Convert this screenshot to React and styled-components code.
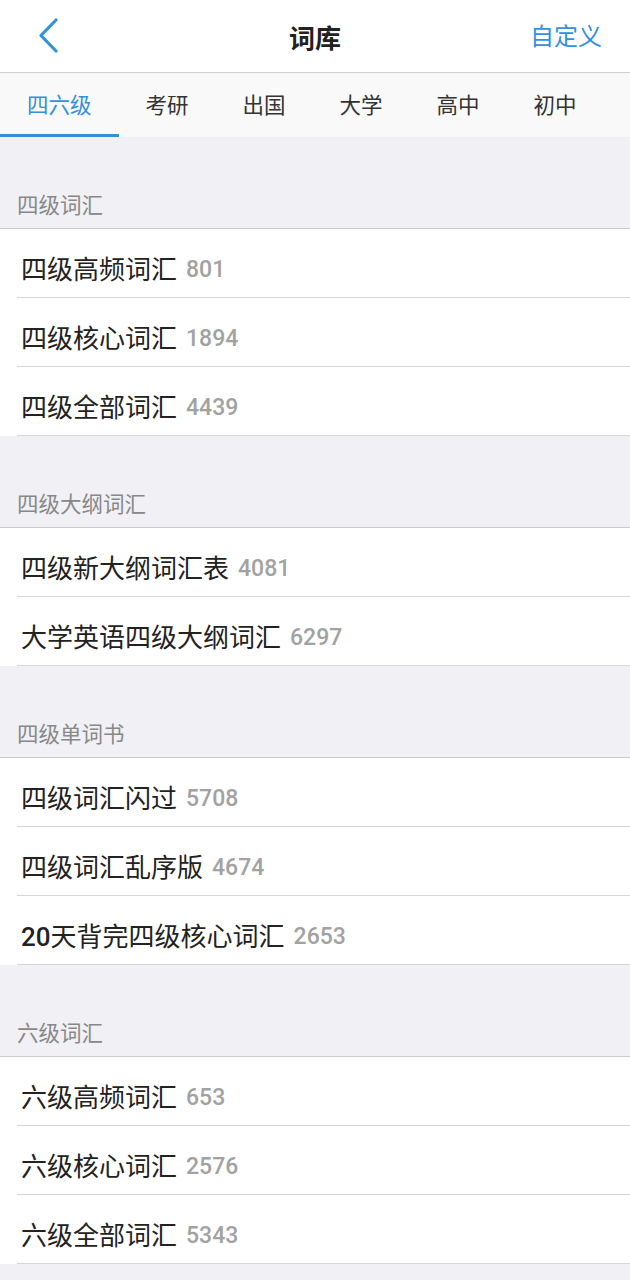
import styled, { createGlobalStyle } from 'styled-components';

const GlobalStyle = createGlobalStyle`
  html, body {
    margin: 0;
    padding: 0;
    background: #f1f1f5;
  }

  body {
    font-family: "Noto Sans CJK SC", "Noto Sans", sans-serif;
  }
`;

const BLUE = '#3191de';

const StyledPage = styled.div`
  width: 630px;
  min-height: 1280px;
  overflow: hidden;
  background: #f1f1f5;
`;

const StyledHeader = styled.header`
  align-items: center;
  background: #fff;
  border-bottom: 1px solid #cfcfd3;
  box-sizing: border-box;
  display: grid;
  grid-template-columns: 110px 1fr 110px;
  height: 73px;
`;

const StyledBack = styled.button`
  background: none;
  border: 0;
  cursor: pointer;
  display: flex;
  padding: 0 0 0 36px;
`;

const StyledTitle = styled.h1`
  color: #222;
  font-size: 26px;
  font-weight: 700;
  margin: 0;
  text-align: center;
`;

const StyledAction = styled.button`
  background: none;
  border: 0;
  color: ${BLUE};
  cursor: pointer;
  font-family: inherit;
  font-size: 24px;
  justify-self: end;
  padding: 0 28px 4px 0;
`;

const StyledTabs = styled.nav`
  background: #f9f9f9;
  display: flex;
  height: 64px;
  white-space: nowrap;
`;

const StyledTab = styled.div`
  align-items: center;
  border-bottom: 3px solid ${({ $active }) => ($active ? BLUE : 'transparent')};
  box-sizing: border-box;
  color: ${({ $active }) => ($active ? BLUE : '#333')};
  display: flex;
  flex-shrink: 0;
  font-size: 21.5px;
  height: 64px;
  padding: 0 27px;
`;

const StyledSectionHead = styled.div`
  align-items: flex-end;
  border-bottom: 1px solid #cbcbcf;
  box-sizing: border-box;
  color: #888;
  display: flex;
  font-size: 21.5px;
  height: 92px;
  padding: 0 0 9px 17px;
`;

const StyledList = styled.ul`
  background: #fff;
  list-style: none;
  margin: 0;
  padding: 0 0 0 17px;
`;

const StyledRow = styled.li`
  align-items: center;
  border-bottom: 1px solid #d6d6d8;
  box-sizing: border-box;
  display: flex;
  gap: 9px;
  height: 69px;
  padding: 8px 0 0 4px;
`;

const StyledName = styled.span`
  color: #222;
  font-size: 26px;

  b {
    font-family: Roboto, sans-serif;
    font-weight: 500;
  }
`;

const StyledCount = styled.span`
  color: #a2a2a2;
  font-family: Roboto, sans-serif;
  font-size: 23px;
  font-weight: 500;
  padding-top: 5px;
`;

const tabs = ['四六级', '考研', '出国', '大学', '高中', '初中', '小学'];

const sections = [
  {
    title: '四级词汇',
    items: [
      ['四级高频词汇', 801],
      ['四级核心词汇', 1894],
      ['四级全部词汇', 4439],
    ],
  },
  {
    title: '四级大纲词汇',
    items: [
      ['四级新大纲词汇表', 4081],
      ['大学英语四级大纲词汇', 6297],
    ],
  },
  {
    title: '四级单词书',
    items: [
      ['四级词汇闪过', 5708],
      ['四级词汇乱序版', 4674],
      ['20天背完四级核心词汇', 2653],
    ],
  },
  {
    title: '六级词汇',
    items: [
      ['六级高频词汇', 653],
      ['六级核心词汇', 2576],
      ['六级全部词汇', 5343],
    ],
  },
];

function renderName(name) {
  const match = name.match(/^(\d+)(.*)$/);
  if (!match) return name;
  return (
    <>
      <b>{match[1]}</b>
      {match[2]}
    </>
  );
}

function App() {
  return (
    <StyledPage>
      <GlobalStyle />
      <StyledHeader>
        <StyledBack aria-label="返回">
          <svg width="26" height="36" viewBox="0 0 26 36" fill="none">
            <path d="M20 2 L5 17.5 L20 33" stroke={BLUE} strokeWidth="3.2" strokeLinecap="round" strokeLinejoin="round" />
          </svg>
        </StyledBack>
        <StyledTitle>词库</StyledTitle>
        <StyledAction>自定义</StyledAction>
      </StyledHeader>

      <StyledTabs>
        {tabs.map((tab, i) => (
          <StyledTab key={tab} $active={i === 0}>
            {tab}
          </StyledTab>
        ))}
      </StyledTabs>

      {sections.map((section) => (
        <section key={section.title}>
          <StyledSectionHead>{section.title}</StyledSectionHead>
          <StyledList>
            {section.items.map(([name, count]) => (
              <StyledRow key={name}>
                <StyledName>{renderName(name)}</StyledName>
                <StyledCount>{count}</StyledCount>
              </StyledRow>
            ))}
          </StyledList>
        </section>
      ))}
    </StyledPage>
  );
}

export default App;
